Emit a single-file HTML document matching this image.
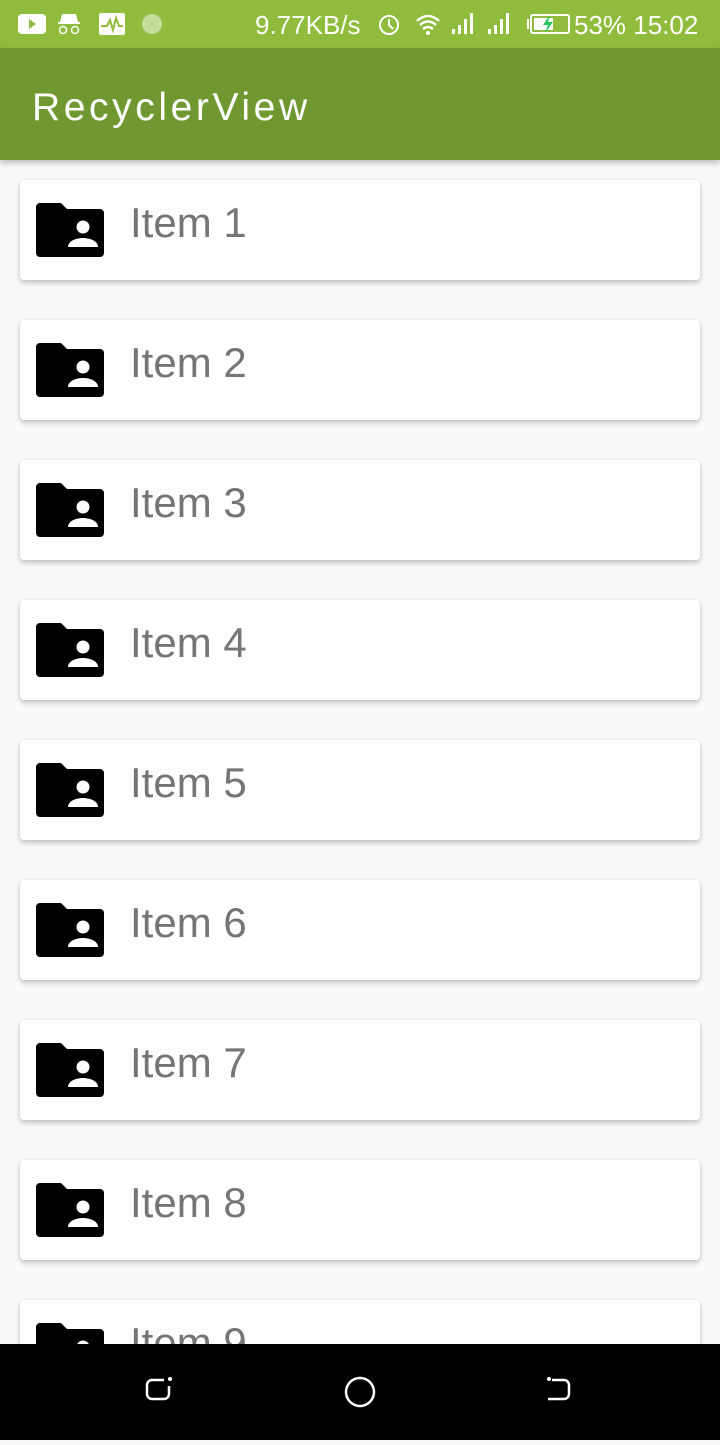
<!DOCTYPE html>
<html><head><meta charset="utf-8"><style>
*{margin:0;padding:0;box-sizing:border-box}
body{width:720px;height:1440px;overflow:hidden;background:#fafafa;font-family:"Liberation Sans",sans-serif;position:relative}
.sb{position:absolute;top:0;left:0;width:720px;height:48px;background:#8fbc3c;color:#fff}
.ab{position:absolute;top:48px;left:0;width:720px;height:112px;background:#6f9830;box-shadow:0 3px 6px rgba(0,0,0,.25);z-index:2}
.ab span{position:absolute;left:32px;top:60px;transform:translateY(-50%);font-size:39px;color:#fff;letter-spacing:3.6px;line-height:44px}
.card{position:absolute;left:20px;width:680px;height:100px;background:#fff;border-radius:4px;box-shadow:0 3px 6px rgba(0,0,0,.22),0 0 2px rgba(0,0,0,.08)}
.card svg{position:absolute;left:16px;top:22px}
.card span{position:absolute;left:110px;top:19px;font-size:42px;color:#757575;line-height:48px}
.nav{position:absolute;top:1344px;left:0;width:720px;height:96px;background:#000;z-index:3}
</style></head><body>
<div class="sb">
<svg width="720" height="48" style="position:absolute;left:0;top:0">
<rect x="18" y="14" width="28" height="20" rx="4" fill="#fff"/><path d="M29 19v10l7-5z" fill="#8fbc3c"/>
<path d="M62 14h14l2 8h-18z" fill="#fff"/><rect x="58" y="22" width="22" height="2" fill="#fff"/><circle cx="63" cy="30" r="3.5" fill="none" stroke="#fff" stroke-width="1.5"/><circle cx="75" cy="30" r="3.5" fill="none" stroke="#fff" stroke-width="1.5"/>
<rect x="99" y="13" width="26" height="22" rx="2" fill="#fff"/><path d="M101 26h6l3-6 3 10 3-12 3 8h4" fill="none" stroke="#8fbc3c" stroke-width="2"/>
<circle cx="152" cy="24" r="10" fill="#c4dd9a"/>
<text x="255" y="34" font-family="Liberation Sans" font-size="26" fill="#fff">9.77KB/s</text>
<circle cx="389" cy="25" r="9" fill="none" stroke="#fff" stroke-width="2"/><path d="M389 19v6l4 4" stroke="#fff" stroke-width="2" fill="none"/>
<path d="M417 21q11-10 22 0M420 25q8-7 16 0M423 29q5-4 10 0" stroke="#fff" stroke-width="2.5" fill="none"/><circle cx="428" cy="33" r="2" fill="#fff"/>
<rect x="452" y="29" width="3" height="5" fill="#fff"/><rect x="458" y="25" width="3" height="9" fill="#fff"/><rect x="464" y="19" width="3" height="15" fill="#fff"/><rect x="470" y="13" width="3" height="21" fill="#fff"/>
<rect x="488" y="29" width="3" height="5" fill="#fff"/><rect x="494" y="25" width="3" height="9" fill="#fff"/><rect x="500" y="19" width="3" height="15" fill="#fff"/><rect x="506" y="13" width="3" height="21" fill="#fff"/>
<rect x="527" y="19" width="2" height="10" fill="#fff"/><rect x="531" y="15" width="38" height="18" rx="2" fill="none" stroke="#fff" stroke-width="2"/><rect x="534" y="18" width="19" height="12" fill="#fff"/><path d="M550 15l-7 10h5l-3 8 8-11h-5z" fill="#22c55e"/>
<text x="574" y="34" font-family="Liberation Sans" font-size="26" fill="#fff">53% 15:02</text>
</svg></div>
<div class="ab"><span>RecyclerView</span></div>
<div id="list"></div>
<script>
var h='';
for(var i=0;i<9;i++){h+='<div class="card" style="top:'+(180+i*140)+'px"><svg width="68" height="56" viewBox="0 0 68 56"><path d="M4 1h21l6 6h33a4 4 0 0 1 4 4v40a4 4 0 0 1-4 4H4a4 4 0 0 1-4-4V5a4 4 0 0 1 4-4z" fill="#000"/><circle cx="47" cy="25" r="6.5" fill="#fff"/><path d="M32 45c0-6 8-9 15-9s15 3 15 9z" fill="#fff"/></svg><span>Item '+(i+1)+'</span></div>';}
document.getElementById('list').innerHTML=h;
</script>
<div class="nav"><svg width="720" height="96">
<path d="M164 36h-12a5 5 0 0 0-5 5v9a5 5 0 0 0 5 5h12a5 5 0 0 0 5-5v-8" fill="none" stroke="#fff" stroke-width="2.5"/><circle cx="170" cy="35" r="2" fill="#fff"/>
<circle cx="360" cy="48" r="14" fill="none" stroke="#fff" stroke-width="2.5"/>
<path d="M552 36h12a5 5 0 0 1 5 5v9a5 5 0 0 1-5 5h-16" fill="none" stroke="#fff" stroke-width="2.5"/><circle cx="549" cy="35" r="2" fill="#fff"/>
</svg></div>
</body></html>
